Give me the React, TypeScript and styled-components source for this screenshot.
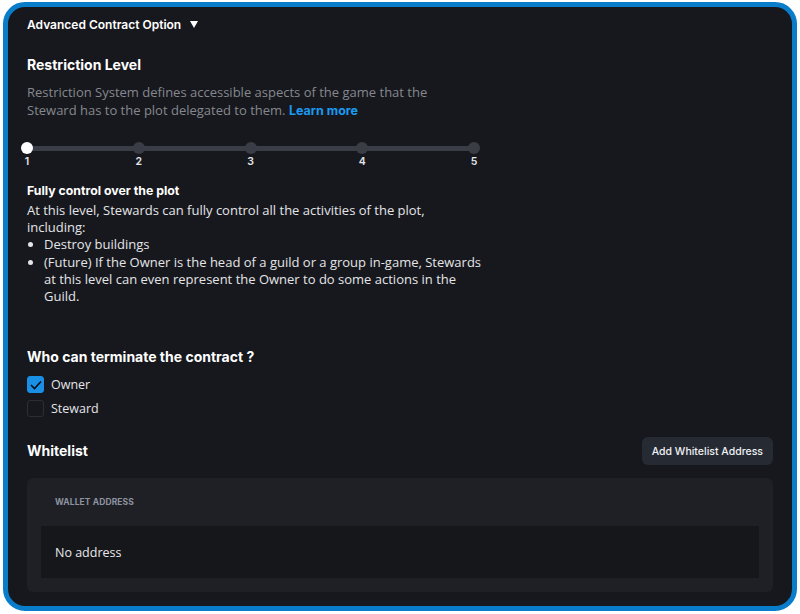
import * as React from "react";
import styled, { createGlobalStyle } from "styled-components";

const GlobalStyle = createGlobalStyle`
  html, body {
    margin: 0;
    padding: 0;
    background: #ffffff;
  }
  * {
    box-sizing: border-box;
  }
`;

const Frame = styled.div`
  width: 794px;
  height: 609px;
  margin: 2px 0 0 3px;
  border: 5px solid #0a7dca;
  border-radius: 22px;
  background: #17181d;
  color: #ffffff;
  font-family: Inter, "Open Sans", sans-serif;
  padding: 5px 19px 0 19px;
  overflow: hidden;
`;

const Toggle = styled.div`
  display: flex;
  align-items: center;
  gap: 9px;
  height: 24px;
  font-size: 12px;
  font-weight: 600;
`;

const Heading = styled.h2<{ $mt: number }>`
  margin: ${(p) => p.$mt}px 0 0 0;
  font-size: 14px;
  font-weight: 700;
  line-height: 20px;
`;

const Body = styled.p<{ $muted?: boolean }>`
  margin: 0;
  font-family: "Open Sans", sans-serif;
  font-size: 13px;
  line-height: 17.2px;
  color: ${(p) => (p.$muted ? "#85888f" : "#e4e5e8")};
`;

const Description = styled(Body)`
  margin-top: 8px;
  line-height: 18px;
`;

const Link = styled.a`
  color: #1a9af0;
  font-weight: 700;
  font-family: Inter, sans-serif;
  font-size: 12.5px;
  text-decoration: none;
`;

const Slider = styled.div`
  width: 459px;
  margin: 22px 0 0 -6px;
`;

const Track = styled.div`
  position: relative;
  height: 12px;
  display: flex;
  align-items: center;
  justify-content: space-between;
  &::before {
    content: "";
    position: absolute;
    left: 6px;
    right: 6px;
    top: 4px;
    height: 5px;
    background: #3a3d45;
  }
`;

const Dot = styled.span<{ $active?: boolean }>`
  position: relative;
  width: 12px;
  height: 12px;
  border-radius: 50%;
  background: ${(p) => (p.$active ? "#ffffff" : "#3a3d45")};
`;

const Labels = styled.div`
  display: flex;
  justify-content: space-between;
  margin-top: 1px;
  font-size: 10.5px;
  font-weight: 600;
  color: #e4e5e8;
  line-height: 14px;
  & > span {
    width: 12px;
    text-align: center;
  }
`;

const LevelTitle = styled.div`
  margin-top: 13px;
  font-size: 12.3px;
  font-weight: 700;
  line-height: 18px;
`;

const LevelText = styled.div`
  width: 458px;
  margin-top: 2px;
`;

const List = styled.ul`
  margin: 0;
  padding-left: 17px;
  font-family: "Open Sans", sans-serif;
  font-size: 13px;
  line-height: 17.2px;
  color: #e4e5e8;
`;

const CheckList = styled.div`
  display: flex;
  flex-direction: column;
  gap: 7px;
  margin-top: 9px;
`;

const CheckRow = styled.label`
  display: flex;
  align-items: center;
  gap: 7px;
  font-family: "Open Sans", sans-serif;
  font-size: 12.5px;
  color: #e4e5e8;
  height: 17px;
`;

const Box = styled.span<{ $checked?: boolean }>`
  width: 17px;
  height: 17px;
  border-radius: 3px;
  display: flex;
  align-items: center;
  justify-content: center;
  background: ${(p) => (p.$checked ? "#1a8fe6" : "transparent")};
  border: 1px solid ${(p) => (p.$checked ? "#1a8fe6" : "#2c2e35")};
`;

const WhitelistBar = styled.div`
  display: flex;
  align-items: center;
  justify-content: space-between;
  margin-top: 20px;
`;

const Button = styled.button`
  height: 28px;
  padding: 0 10px;
  border: none;
  border-radius: 6px;
  background: #262a33;
  color: #f0f1f3;
  font-family: Inter, sans-serif;
  font-size: 10.5px;
  font-weight: 500;
  cursor: pointer;
`;

const Card = styled.div`
  margin-top: 13px;
  background: #1f2025;
  border-radius: 6px;
  padding: 0 14px 14px 14px;
`;

const HeadCell = styled.div`
  height: 48px;
  display: flex;
  align-items: center;
  padding-left: 14px;
  font-size: 8.5px;
  font-weight: 700;
  letter-spacing: 0.1px;
  color: #8d93a0;
`;

const Row = styled.div`
  height: 52px;
  display: flex;
  align-items: center;
  padding-left: 14px;
  background: #16171b;
  font-family: "Open Sans", sans-serif;
  font-size: 12.5px;
  color: #e8e9eb;
`;

export default function App() {
  const levels = [1, 2, 3, 4, 5];
  return (
    <>
      <GlobalStyle />
      <Frame>
        <Toggle>
          Advanced Contract Option
          <svg width="8" height="7" viewBox="0 0 8 7">
            <path d="M0 0 H8 L4 7 Z" fill="#ffffff" />
          </svg>
        </Toggle>

        <Heading $mt={19}>Restriction Level</Heading>
        <Description $muted>
          Restriction System defines accessible aspects of the game that the
          <br />
          Steward has to the plot delegated to them. <Link href="#">Learn more</Link>
        </Description>

        <Slider>
          <Track>
            {levels.map((l) => (
              <Dot key={l} $active={l === 1} />
            ))}
          </Track>
          <Labels>
            {levels.map((l) => (
              <span key={l}>{l}</span>
            ))}
          </Labels>
        </Slider>

        <LevelTitle>Fully control over the plot</LevelTitle>
        <LevelText>
          <Body>
            At this level, Stewards can fully control all the activities of the plot,
            including:
          </Body>
          <List>
            <li>Destroy buildings</li>
            <li>
              (Future) If the Owner is the head of a guild or a group in-game, Stewards
              at this level can even represent the Owner to do some actions in the
              Guild.
            </li>
          </List>
        </LevelText>

        <Heading $mt={42}>Who can terminate the contract ?</Heading>
        <CheckList>
          <CheckRow>
            <Box $checked>
              <svg width="12" height="10" viewBox="0 0 12 10">
                <path d="M1 5 L4.5 8.5 L11 1.5" fill="none" stroke="#0b0d12" strokeWidth="1.6" />
              </svg>
            </Box>
            Owner
          </CheckRow>
          <CheckRow>
            <Box />
            Steward
          </CheckRow>
        </CheckList>

        <WhitelistBar>
          <Heading $mt={0}>Whitelist</Heading>
          <Button>Add Whitelist Address</Button>
        </WhitelistBar>

        <Card>
          <HeadCell>WALLET ADDRESS</HeadCell>
          <Row>No address</Row>
        </Card>
      </Frame>
    </>
  );
}
